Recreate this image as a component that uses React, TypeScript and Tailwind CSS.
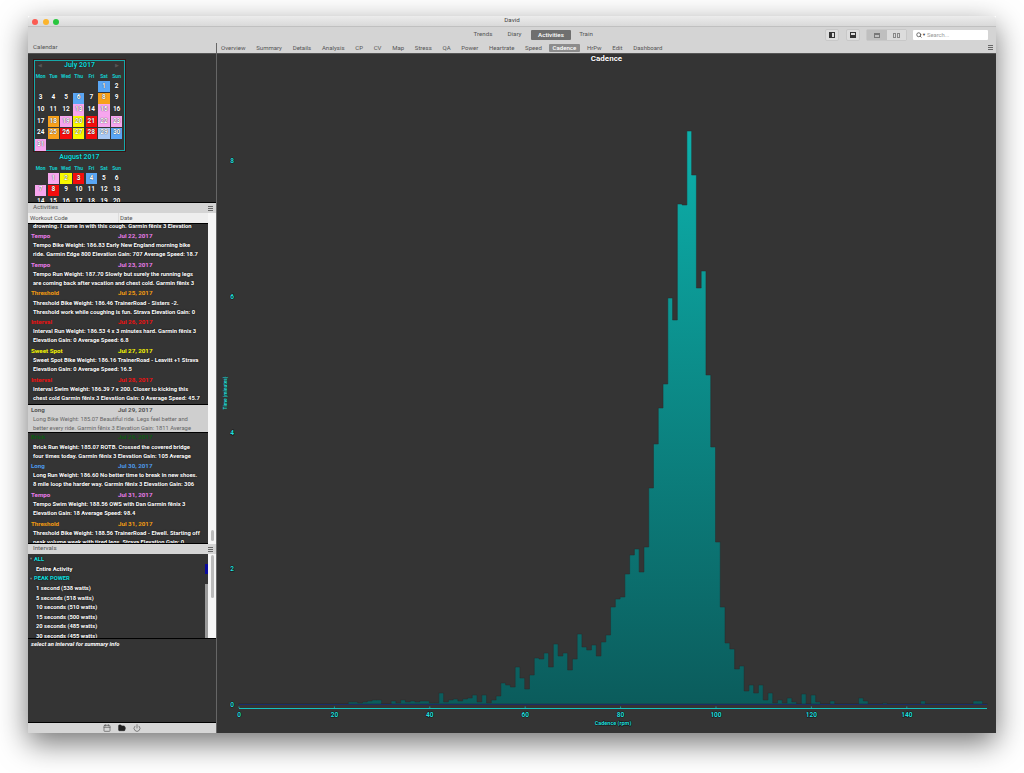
import { Calendar, FolderOpen, Power, Search } from "lucide-react";

const tabs = ["Overview", "Summary", "Details", "Analysis", "CP", "CV", "Map", "Stress", "QA", "Power", "Heartrate", "Speed", "Cadence", "HrPw", "Edit", "Dashboard"];

const colors: Record<string, string> = {
  blue: "bg-[#5aa6f4]",
  orange: "bg-[#f7a11c]",
  pink: "bg-[#f7a6ee]",
  yellow: "bg-[#f8f800]",
  red: "bg-[#f40d0d]",
  pale: "bg-[#a9c9f2]",
};

const july: (number | null)[] = [null, null, null, null, null, 1, 2, 3, 4, 5, 6, 7, 8, 9, 10, 11, 12, 13, 14, 15, 16, 17, 18, 19, 20, 21, 22, 23, 24, 25, 26, 27, 28, 29, 30, 31];
const julyColors: Record<number, string> = { 1: "blue", 6: "blue", 8: "orange", 13: "pink", 15: "pink", 18: "orange", 19: "pink", 20: "yellow", 21: "red", 22: "pink", 23: "pink", 25: "orange", 26: "red", 27: "yellow", 28: "red", 29: "pale", 30: "blue", 31: "pink" };
const august: (number | null)[] = [null, 1, 2, 3, 4, 5, 6, 7, 8, 9, 10, 11, 12, 13, 14, 15, 16, 17, 18, 19, 20];
const augustColors: Record<number, string> = { 1: "pink", 2: "yellow", 3: "red", 4: "blue", 7: "pink", 8: "red" };

const activities = [
  { name: "Tempo", date: "Jul 22, 2017", color: "text-[#ea7cea]", lines: ["Tempo Bike Weight: 186.83 Early New England morning bike", "ride. Garmin Edge 800 Elevation Gain: 707 Average Speed: 18.7"] },
  { name: "Tempo", date: "Jul 23, 2017", color: "text-[#ea7cea]", lines: ["Tempo Run Weight: 187.70 Slowly but surely the running legs", "are coming back after vacation and chest cold. Garmin fēnix 3"] },
  { name: "Threshold", date: "Jul 25, 2017", color: "text-[#f39c12]", lines: ["Threshold Bike Weight: 186.46 TrainerRoad - Sisters -2.", "Threshold work while coughing is fun. Strava Elevation Gain: 0"] },
  { name: "Interval", date: "Jul 26, 2017", color: "text-[#f01010]", lines: ["Interval Run Weight: 186.53 4 x 3 minutes hard. Garmin fēnix 3", "Elevation Gain: 0 Average Speed: 6.8"] },
  { name: "Sweet Spot", date: "Jul 27, 2017", color: "text-[#f4f400]", lines: ["Sweet Spot Bike Weight: 186.16 TrainerRoad - Leavitt +1 Strava", "Elevation Gain: 0 Average Speed: 16.5"] },
  { name: "Interval", date: "Jul 28, 2017", color: "text-[#f01010]", lines: ["Interval Swim Weight: 186.39 7 x 200. Closer to kicking this", "chest cold Garmin fēnix 3 Elevation Gain: 0 Average Speed: 45.7"] },
  { name: "Long", date: "Jul 29, 2017", color: "text-[#555555]", selected: true, lines: ["Long Bike Weight: 185.07 Beautiful ride. Legs feel better and", "better every ride. Garmin fēnix 3 Elevation Gain: 1811 Average"] },
  { name: "Brick", date: "Jul 29, 2017", color: "text-[#0b5c12]", lines: ["Brick Run Weight: 185.07 ROTB. Crossed the covered bridge", "four times today. Garmin fēnix 3 Elevation Gain: 105 Average"] },
  { name: "Long", date: "Jul 30, 2017", color: "text-[#4d9bec]", lines: ["Long Run Weight: 186.60 No better time to break in new shoes.", "8 mile loop the harder way. Garmin fēnix 3 Elevation Gain: 306"] },
  { name: "Tempo", date: "Jul 31, 2017", color: "text-[#ea7cea]", lines: ["Tempo Swim Weight: 188.56 OWS with Dan Garmin fēnix 3", "Elevation Gain: 18 Average Speed: 98.4"] },
  { name: "Threshold", date: "Jul 31, 2017", color: "text-[#f39c12]", lines: ["Threshold Bike Weight: 188.56 TrainerRoad - Elwell. Starting off", "peak volume week with tired legs. Strava Elevation Gain: 0"] },
];

const peaks = ["1 second (538 watts)", "5 seconds (518 watts)", "10 seconds (510 watts)", "15 seconds (500 watts)", "20 seconds (485 watts)", "30 seconds (455 watts)"];

// top of each histogram bar (page y) by cadence
const tops: Record<number, number> = {
  23: 702, 24: 702, 25: 703, 26: 702, 27: 701, 28: 700, 29: 700, 32: 701, 33: 703, 34: 700, 35: 702, 36: 701, 37: 702, 38: 701, 39: 701,
  40: 703, 41: 703, 42: 693, 43: 702, 44: 700, 45: 699, 46: 701, 47: 699, 48: 698, 49: 695, 50: 702, 51: 695, 52: 703, 53: 700, 54: 696,
  55: 683, 56: 685, 57: 687, 58: 667, 59: 678, 60: 689, 61: 675, 62: 658, 63: 659, 64: 653, 65: 667, 66: 644, 67: 656, 68: 653, 69: 670,
  70: 659, 71: 634, 72: 647, 73: 650, 74: 645, 75: 656, 76: 642, 77: 635, 78: 607, 79: 599, 80: 597, 81: 574, 82: 555, 83: 549, 84: 572,
  85: 547, 86: 488, 87: 444, 88: 408, 89: 384, 90: 298, 91: 320, 92: 204, 93: 205, 94: 131, 95: 175, 96: 288, 97: 271, 98: 375, 99: 447,
  100: 542, 101: 607, 102: 643, 103: 649, 104: 669, 105: 666, 106: 691, 107: 685, 108: 693, 109: 685, 110: 700, 111: 693, 112: 703, 113: 700,
  114: 703, 115: 698, 116: 702, 118: 694, 120: 695, 121: 702, 124: 701, 130: 698, 131: 701, 135: 703, 143: 701, 154: 701, 155: 701,
};

const barX = (r: number) => 238.5 + r * 4.77;

function barsPath() {
  let d = `M${barX(0)} 704`;
  for (let r = 0; r <= 156; r++) {
    const top = tops[r] ?? 704;
    d += ` L${barX(r)} ${top} L${barX(r + 1)} ${top}`;
  }
  return d + ` L${barX(157)} 704 Z`;
}

const labelProps = {
  fill: "#22dedc",
  stroke: "rgba(0,0,0,0.7)",
  strokeWidth: 1,
  paintOrder: "stroke",
  fontFamily: "Roboto",
  fontWeight: 700,
  textAnchor: "middle",
} as const;

function Histogram() {
  return (
    <svg viewBox="217 64 779 669" className="w-full flex-1 block">
      <defs>
        <linearGradient id="bars" gradientUnits="userSpaceOnUse" x1="0" y1="131" x2="0" y2="704">
          <stop offset="0" stopColor="#0cb0ab" />
          <stop offset="1" stopColor="#0b5c5c" />
        </linearGradient>
      </defs>
      <path d={barsPath()} fill="url(#bars)" stroke="#2b2b2b" strokeWidth="0.5" />
      <line x1="239" x2="987" y1="704.5" y2="704.5" stroke="#1b2c68" strokeWidth="1" />
      <line x1="239" x2="987" y1="708.5" y2="708.5" stroke="#16c2c0" strokeWidth="1" />
      {[0, 20, 40, 60, 80, 100, 120, 140].map((v) => (
        <g key={v}>
          <line x1={239 + v * 4.77} x2={239 + v * 4.77} y1="706.5" y2="708" stroke="#16c2c0" strokeWidth="0.7" />
          <text x={239 + v * 4.77} y="717" fontSize="6.5" {...labelProps}>{v}</text>
        </g>
      ))}
      {[[8, 161], [6, 297], [4, 433], [2, 569], [0, 705]].map(([v, y]) => (
        <text key={v} x="232" y={y + 2} fontSize="6.5" {...labelProps}>{v}</text>
      ))}
      <text x="613" y="724.5" fontSize="5.5" {...labelProps}>Cadence (rpm)</text>
      <text transform="translate(227 393) rotate(-90)" fontSize="4.8" {...labelProps} strokeWidth={0.3}>Time (minutes)</text>
    </svg>
  );
}

function Month({ title, days, marks, arrows, className = "" }: { title: string; days: (number | null)[]; marks: Record<number, string>; arrows?: boolean; className?: string }) {
  return (
    <div className={`w-[89px] ${className}`}>
      <div className="h-[9px] flex items-center justify-between px-[3px] text-[#555] text-[5px]">
        <span className="w-[6px]">{arrows ? "◀" : ""}</span>
        <span className="text-[#16d8d8] text-[7px] font-bold [text-shadow:0_0_1px_#000]">{title}</span>
        <span className="w-[6px]">{arrows ? "▶" : ""}</span>
      </div>
      <div className="grid grid-cols-[repeat(7,11.37px)] gap-x-[1.3px] h-[10px] pt-[3px] items-center text-center text-[5px] font-bold text-[#13cccc]">
        {["Mon", "Tue", "Wed", "Thu", "Fri", "Sat", "Sun"].map((d) => <span key={d}>{d}</span>)}
      </div>
      <div className="grid grid-cols-[repeat(7,11.37px)] gap-x-[1.3px] gap-y-[0.36px] auto-rows-[11.3px] pt-[1px] text-center text-[6.5px] font-bold text-white [text-shadow:0_0_1px_#000]">
        {days.map((d, i) => (
          <div key={i} className={`flex items-center justify-center ${d && marks[d] ? colors[marks[d]] : ""}`}>{d}</div>
        ))}
      </div>
    </div>
  );
}

function Menu() {
  return (
    <div className="w-[5px] h-[5px] flex flex-col justify-between">
      <div className="h-[1px] bg-[#666]" />
      <div className="h-[1px] bg-[#666]" />
      <div className="h-[1px] bg-[#666]" />
    </div>
  );
}

function PaneHeader({ title }: { title: string }) {
  return (
    <div className="h-[10px] shrink-0 bg-[#d4d4d4] flex items-center justify-between pl-[5px] pr-[3px] text-[6.2px] text-[#555]">
      <span>{title}</span>
      <Menu />
    </div>
  );
}

function ActivityList() {
  return (
    <div className="flex-1 flex min-h-0">
      <div className="w-[180px] bg-[#343434] border-y border-black overflow-hidden text-[5.8px] font-bold whitespace-nowrap">
        <div className="h-[7px] pl-[5px] leading-[5px] text-white [text-shadow:0_0_1.5px_#000]">drowning. I came in with this cough. Garmin fēnix 3 Elevation</div>
        {activities.map((a, i) => (
          <div key={i} className={`h-[28.8px] pt-[1px] ${a.selected ? "bg-[#cfcfcf] border-y border-black" : ""}`}>
            <div className={`h-[9px] flex items-center pl-[3px] text-[6.2px] font-bold ${a.color}`}>
              <span className="w-[87px]">{a.name}</span>
              <span>{a.date}</span>
            </div>
            {a.lines.map((l) => (
              <div key={l} className={`h-[9px] leading-[9px] pl-[5px] ${a.selected ? "text-[#666] font-normal" : "text-white [text-shadow:0_0_1.5px_#000]"}`}>{l}</div>
            ))}
          </div>
        ))}
      </div>
      <div className="w-[8px] bg-[#f6f6f6] flex flex-col justify-end pb-[3px] items-center">
        <div className="w-[3px] h-[11px] rounded-full bg-[#bbb]" />
      </div>
    </div>
  );
}

function IntervalList() {
  return (
    <div className="h-[84px] shrink-0 flex">
      <div className="relative w-[180px] bg-[#343434] overflow-hidden text-[5.8px] font-bold whitespace-nowrap text-white [text-shadow:0_0_1.5px_#000]">
        <div className="absolute right-0 top-[10px] w-[3px] h-[10px] bg-[#0a0a9c]" />
        <div className="absolute right-0 top-[30px] bottom-0 w-[3px] bg-[#9a9a9a]" />
        <div className="h-[10px] flex items-center pl-[1px] text-[#13e0e0]"><span className="text-[#888] text-[4px] mr-[1px]">▼</span>ALL</div>
        <div className="h-[10px] flex items-center pl-[8px]">Entire Activity</div>
        <div className="h-[9.6px] flex items-center pl-[1px] text-[#13e0e0]"><span className="text-[#888] text-[4px] mr-[1px]">▼</span>PEAK POWER</div>
        {peaks.map((p) => <div key={p} className="h-[9.6px] flex items-center pl-[8px]">{p}</div>)}
      </div>
      <div className="w-[8px] bg-[#f6f6f6] flex justify-center pt-[1px]">
        <div className="w-[3px] h-[43px] rounded-full bg-[#bbb]" />
      </div>
    </div>
  );
}

export default function App() {
  return (
    <div className="w-[1024px] h-[773px] bg-white overflow-hidden pt-[16px] pl-[28px] font-['Roboto',sans-serif]">
      <div className="w-[968px] h-[717px] flex flex-col shadow-[0_10px_28px_rgba(0,0,0,0.55)]">
        <div className="h-[11px] shrink-0 rounded-t-[3px] bg-gradient-to-b from-[#ececec] to-[#d9d9d9] border-b border-[#c0c0c0] relative flex items-center justify-center text-[6.2px] text-[#444]">
          <div className="absolute left-[4px] top-[3px] flex gap-[4.5px]">
            <div className="w-[6px] h-[6px] rounded-full bg-[#fb5b52]" />
            <div className="w-[6px] h-[6px] rounded-full bg-[#fbb42c]" />
            <div className="w-[6px] h-[6px] rounded-full bg-[#28c63e]" />
          </div>
          David
        </div>
        <div className="h-[16px] shrink-0 bg-[#d4d4d4] relative flex items-center text-[6.2px] text-[#555]">
          <div className="ml-[440px] flex items-center">
            <span className="w-[30px] text-center">Trends</span>
            <span className="w-[33px] text-center">Diary</span>
            <span className="w-[40px] h-[10px] leading-[10px] text-center bg-[#6f6f6f] text-white rounded-[1px] font-medium">Activities</span>
            <span className="w-[30px] text-center">Train</span>
          </div>
          <div className="absolute left-[797px] top-[2px] flex items-center h-[12px]">
            <div className="w-[14px] h-[12px] bg-[#ddd] border border-[#c8c8c8] rounded-[2px] flex items-center justify-center">
              <div className="w-[6px] h-[6px] border border-[#333] border-l-[3px]" />
            </div>
            <div className="w-[14px] h-[12px] ml-[7px] bg-[#ddd] border border-[#c8c8c8] rounded-[2px] flex items-center justify-center">
              <div className="w-[6px] h-[6px] border border-[#333] border-b-[3px]" />
            </div>
            <div className="w-[41px] h-[12px] ml-[6px] flex border border-[#c8c8c8] rounded-[2px]">
              <div className="flex-1 bg-[#bfbfbf] flex items-center justify-center"><div className="w-[6px] h-[5px] border border-[#777] border-t-2" /></div>
              <div className="flex-1 bg-[#dcdcdc] flex items-center justify-center gap-[1px]">
                <div className="w-[3px] h-[5px] border border-[#888]" />
                <div className="w-[3px] h-[5px] border border-[#888]" />
              </div>
            </div>
            <div className="w-[75px] h-[10px] ml-[6px] bg-white rounded-[1px] flex items-center pl-[3px] text-[5.8px] text-[#999]">
              <Search size={6} strokeWidth={3} className="text-[#444]" />
              <span className="text-[#444] text-[4px] mr-[1px]">▼</span>
              Search...
            </div>
          </div>
        </div>
        <div className="flex-1 flex min-h-0">
          <div className="w-[189px] shrink-0 flex flex-col border-r border-[#666]">
            <div className="h-[11px] shrink-0 bg-[#d4d4d4] flex items-center pl-[5px] text-[6.2px] text-[#555] border-b border-[#555]">Calendar</div>
            <div className="h-[149px] shrink-0 bg-[#343434] overflow-hidden pt-[5px] pl-[5px] border-b border-black">
              <div className="w-[93px] h-[93px] border border-[#3a1414]">
                <div className="w-[91px] h-[91px] border border-[#17a8a8]">
                  <Month title="July 2017" days={july} marks={julyColors} arrows />
                </div>
              </div>
              <div className="pl-[2px]">
                <Month title="August 2017" days={august} marks={augustColors} className="pt-[1px]" />
              </div>
            </div>
            <PaneHeader title="Activities" />
            <div className="h-[10px] shrink-0 flex text-[6px] text-[#555]">
              <div className="w-[90px] bg-[#eeeeee] pl-[2px] leading-[10px]">Workout Code</div>
              <div className="w-[90px] bg-[#eeeeee] border-l border-[#ddd] pl-[1px] leading-[10px]">Date</div>
              <div className="flex-1 bg-[#f6f6f6]" />
            </div>
            <ActivityList />
            <PaneHeader title="Intervals" />
            <IntervalList />
            <div className="h-[84px] shrink-0 bg-[#343434] border-t border-black pl-[3px] text-[5.8px] font-bold italic text-white leading-[10px]">select an interval for summary info</div>
            <div className="h-[11px] shrink-0 bg-[#d6d6d6] border-t border-black flex items-center justify-center gap-[7px] text-[#555]">
              <Calendar size={8} />
              <FolderOpen size={8} fill="#222" className="text-[#222]" />
              <Power size={8} />
            </div>
          </div>
          <div className="flex-1 flex flex-col min-w-0">
            <div className="h-[11px] shrink-0 bg-[#d4d4d4] border-b border-[#555] flex items-center pl-[4px] text-[6.05px] text-[#555] relative">
              <div className="flex items-center gap-[10.7px]">
                {tabs.map((t) => (
                  <span key={t} className={t === "Cadence" ? "bg-[#8c8c8c] text-white rounded-[1px] px-[4px] mx-[-4px] h-[8px] leading-[8px] font-medium" : ""}>{t}</span>
                ))}
              </div>
              <div className="absolute right-[3px] top-[2px]"><Menu /></div>
            </div>
            <div className="flex-1 bg-[#343434] flex flex-col min-h-0">
              <div className="h-[10px] shrink-0 text-center text-[8px] leading-[10px] font-bold text-white [text-shadow:0_0_1px_#000]">Cadence</div>
              <Histogram />
            </div>
          </div>
        </div>
      </div>
    </div>
  );
}
